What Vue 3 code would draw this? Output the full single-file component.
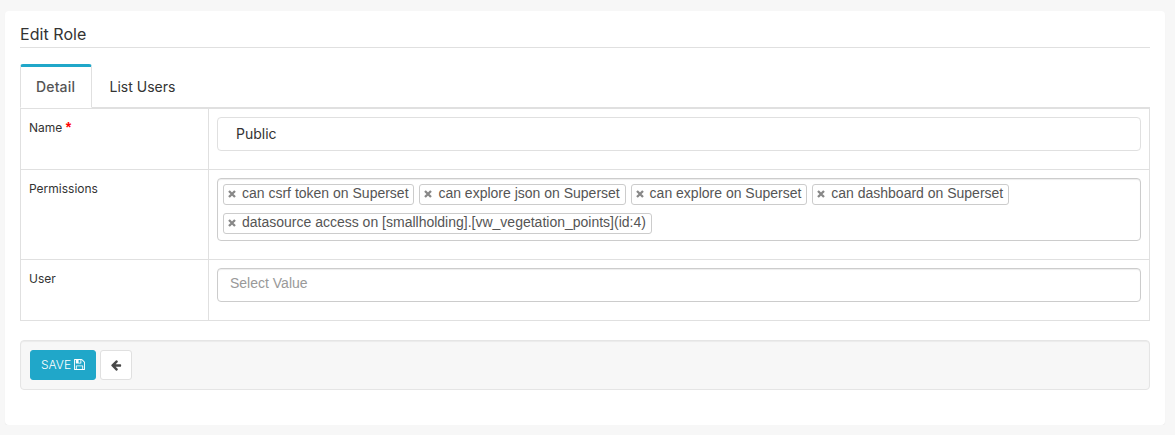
<script setup>
const tags = [
  'can csrf token on Superset',
  'can explore json on Superset',
  'can explore on Superset',
  'can dashboard on Superset',
  'datasource access on [smallholding].[vw_vegetation_points](id:4)',
]
</script>

<template>
  <main class="panel">
    <h1 class="title">Edit Role</h1>
    <nav class="tabs">
      <a class="tab active">Detail</a>
      <a class="tab">List Users</a>
    </nav>
    <section class="form">
      <div class="row name-row">
        <label class="label">Name <b class="required">*</b></label>
        <div class="field"><div class="input">Public</div></div>
      </div>
      <div class="row perm-row">
        <label class="label">Permissions</label>
        <div class="field">
          <div class="select multi">
            <span v-for="tag in tags" :key="tag" class="tag">
              <svg class="cross" viewBox="0 0 8 8"><path d="M1 1 7 7M7 1 1 7" /></svg>
              <span>{{ tag }}</span>
            </span>
          </div>
        </div>
      </div>
      <div class="row user-row">
        <label class="label">User</label>
        <div class="field"><div class="select single">Select Value</div></div>
      </div>
    </section>
    <footer class="well">
      <button class="btn save">
        <span>SAVE</span>
        <svg class="disk" viewBox="128 128 1536 1536"><path d="M512 1536h768v-384h-768v384zm896 0h128v-896q0-14-10-38.5t-20-34.5l-281-281q-10-10-34-20t-39-10v416q0 40-28 68t-68 28h-576q-40 0-68-28t-28-68v-416h-128v1280h128v-416q0-40 28-68t68-28h832q40 0 68 28t28 68v416zm-384-928v-320q0-13-9.5-22.5t-22.5-9.5h-192q-13 0-22.5 9.5t-9.5 22.5v320q0 13 9.5 22.5t22.5 9.5h192q13 0 22.5-9.5t9.5-22.5zm640 32v928q0 40-28 68t-68 28h-1344q-40 0-68-28t-28-68v-1344q0-40 28-68t68-28h928q40 0 88 20t76 48l280 280q28 28 48 76t20 88z" /></svg>
      </button>
      <button class="btn back" aria-label="Back">
        <svg class="arrow" viewBox="0 0 1792 1792"><path d="M1664 896v128q0 53-32.5 90.5t-84.5 37.5h-704l293 294q38 36 38 90t-38 90l-75 76q-37 37-90 37-52 0-91-37l-651-652q-37-37-37-90 0-52 37-91l651-650q38-38 91-38 52 0 90 38l75 74q38 38 38 91t-38 91l-293 293h704q52 0 84.5 37.5t32.5 90.5z" /></svg>
      </button>
    </footer>
  </main>
</template>

<style>
body {
  background: #f7f7f7;
}
#app {
  display: flow-root;
}
</style>

<style scoped>
.panel,
.panel * {
  box-sizing: border-box;
}
.panel {
  width: 1160px;
  height: 414px;
  margin: 11px 0 0 5px;
  padding: 13px 15px 0;
  background: #fff;
  border-radius: 4px;
  box-shadow: 0 1px 1px rgba(0, 0, 0, 0.05);
  font-family: Inter, "Liberation Sans", sans-serif;
  font-size: 14px;
  color: #333;
}
.title {
  height: 24px;
  margin: 0 0 16px;
  border-bottom: 1px solid #e0e0e0;
  font-size: 16px;
  font-weight: 400;
  letter-spacing: 0.05px;
  line-height: 21px;
}
.tabs {
  display: flex;
  height: 44px;
  border-bottom: 1px solid #e0e0e0;
}
.tab {
  height: 43px;
  padding: 0 17.5px;
  line-height: 46px;
}
.tab.active {
  width: 72px;
  height: 44px;
  padding: 0 15px;
  border: 1px solid #e0e0e0;
  border-top: 3px solid #20a7c9;
  border-bottom-color: #fff;
  border-radius: 3px 3px 0 0;
  background: #fff;
  color: #555;
  font-weight: 500;
  letter-spacing: 0.15px;
  line-height: 40px;
}
.form {
  border: 1px solid #e0e0e0;
}
.row {
  display: grid;
  grid-template-columns: 188px 1fr;
}
.row + .row {
  border-top: 1px solid #e0e0e0;
}
.name-row {
  height: 60px;
}
.perm-row {
  height: 90px;
}
.user-row {
  height: 61px;
}
.label {
  padding: 10px 8px;
  border-right: 1px solid #e0e0e0;
  font-size: 12px;
  line-height: 17px;
}
.required {
  color: #f00;
  font-family: "Liberation Sans", sans-serif;
  font-size: 14px;
  line-height: 1;
}
.field {
  padding: 8px;
}
.input {
  height: 34px;
  padding: 0 18px;
  border: 1px solid #e0e0e0;
  border-radius: 4px;
  line-height: 32px;
}
.select {
  border: 1px solid #ccc;
  border-radius: 4px;
  box-shadow: inset 0 1px 1px rgba(0, 0, 0, 0.075);
  font-family: "Liberation Sans", sans-serif;
  color: #555;
}
.multi {
  display: flex;
  flex-wrap: wrap;
  align-content: flex-start;
  gap: 8px 5px;
  height: 63px;
  padding: 5px;
}
.single {
  height: 34px;
  padding: 0 12px;
  color: #999;
  line-height: 28px;
}
.tag {
  display: flex;
  height: 21px;
  padding: 0 4.87px 0 4px;
  border: 1px solid #ccc;
  border-radius: 3px;
  line-height: 17px;
  white-space: nowrap;
}
.cross {
  width: 8px;
  height: 8px;
  margin: 5px 6px 0 0;
  fill: none;
  stroke: #888;
  stroke-width: 2.3;
}
.well {
  display: flex;
  gap: 4px;
  height: 50px;
  margin-top: 19px;
  padding: 9px;
  border: 1px solid #e5e5e5;
  border-radius: 4px;
  background: #f7f7f7;
  box-shadow: inset 0 1px 1px rgba(0, 0, 0, 0.05);
}
.btn {
  display: flex;
  align-items: center;
  justify-content: center;
  height: 30px;
  padding: 0;
  border: 1px solid #e0e0e0;
  border-radius: 3px;
  background: #fff;
  font-family: inherit;
  font-size: 12px;
}
.save {
  gap: 3px;
  width: 66px;
  padding-bottom: 2px;
  border-color: #20a7c9;
  background: #20a7c9;
  color: #fff;
  font-weight: 300;
}
.disk {
  width: 11px;
  height: 11px;
  fill: #fff;
}
.back {
  width: 32px;
}
.arrow {
  width: 12px;
  height: 12px;
  fill: #484848;
}
</style>
